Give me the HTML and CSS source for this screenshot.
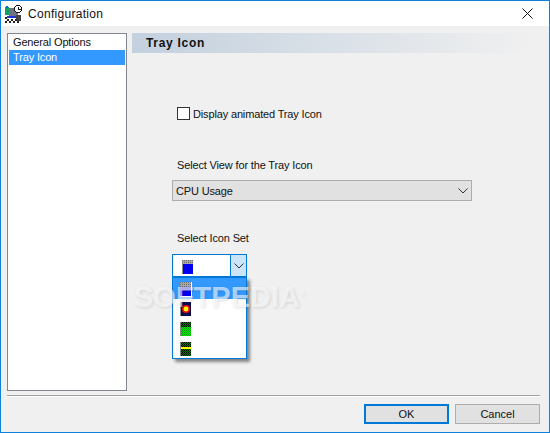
FILE: index.html
```html
<!DOCTYPE html>
<html lang="en">
<head>
  <meta charset="UTF-8">
  <title>Configuration</title>
  <link rel="stylesheet" href="styles.css">
</head>
<body>
  <svg class="defs" width="0" height="0">
    <defs>
      <pattern id="grey-dots" width="2" height="2" patternUnits="userSpaceOnUse">
        <rect width="2" height="2" fill="#a8a8a8"/>
        <rect width="1" height="1" fill="#6e6e6e"/>
      </pattern>
      <pattern id="black-dots" width="2" height="2" patternUnits="userSpaceOnUse">
        <rect width="2" height="2" fill="#0a7a0a"/>
        <rect width="1" height="1" fill="#000"/>
        <rect x="1" y="1" width="1" height="1" fill="#000"/>
      </pattern>
      <pattern id="green-check" width="2" height="2" patternUnits="userSpaceOnUse">
        <rect width="2" height="2" fill="#00f000"/>
        <rect width="1" height="1" fill="#0a9a0a"/>
        <rect x="1" y="1" width="1" height="1" fill="#0a9a0a"/>
      </pattern>
    </defs>
  </svg>

  <div class="window">
    <div class="titlebar">
      <svg class="app-icon" width="17" height="18" viewBox="0 0 17 18" shape-rendering="crispEdges">
        <rect x="4" y="3" width="9" height="9" fill="#6d7382"/>
        <rect x="0" y="2" width="4" height="8" fill="#12a060"/>
        <rect x="1" y="1" width="2" height="2" fill="#0c6bd0"/>
        <circle cx="13" cy="4" r="3.5" fill="#fff" stroke="#111" stroke-width="1"/>
        <path d="M13 2h1v3h-1zM14 4h2v1h-2z" fill="#111"/>
        <rect x="2" y="11" width="9" height="2" fill="#2035d0"/>
        <rect x="11" y="10" width="5" height="6" fill="#444"/>
        <path d="M0 12h2v2H0zM2 14h2v2H2zM0 16h2v2H0zM4 16h2v2H4zM6 14h2v2H6zM8 16h2v2H8zM10 14h2v2h-2zM12 16h2v2h-2z" fill="#222"/>
      </svg>
      <span class="title">Configuration</span>
      <svg class="close" width="11" height="11" viewBox="0 0 11 11">
        <path d="M.5.5l10 10M10.5.5l-10 10" stroke="#111" fill="none"/>
      </svg>
    </div>

    <div class="content">
      <div class="listbox">
        <div class="list-item">General Options</div>
        <div class="list-item selected">Tray Icon</div>
      </div>

      <div class="panel">
        <div class="panel-head">Tray Icon</div>
        <div class="panel-body">
          <label class="check-row">
            <span class="checkbox"></span>
            <span>Display animated Tray Icon</span>
          </label>

          <div class="field-label view-label">Select View for the Tray Icon</div>
          <div class="combo">
            <span>CPU Usage</span>
            <svg width="10" height="6" viewBox="0 0 10 6"><path d="M.5.5L5 5 9.5.5" stroke="#333" fill="none"/></svg>
          </div>

          <div class="field-label set-label">Select Icon Set</div>
          <div class="icon-combo">
            <div class="icon-value">
              <svg class="set-icon" width="11" height="14" viewBox="0 0 11 14" shape-rendering="crispEdges">
                <rect width="11" height="4" fill="url(#grey-dots)"/>
                <rect width="1" height="14" fill="#888"/>
                <rect x="1" y="4" width="10" height="10" fill="#0000f0"/>
              </svg>
            </div>
            <div class="icon-arrow">
              <svg width="10" height="6" viewBox="0 0 10 6"><path d="M.5.5L5 5 9.5.5" stroke="#333" fill="none"/></svg>
            </div>

            <div class="icon-list">
              <div class="icon-item selected">
                <svg class="set-icon" width="12" height="15" viewBox="0 0 12 15" shape-rendering="crispEdges">
                  <rect width="12" height="15" fill="#fff"/>
                  <rect width="11" height="5" fill="url(#grey-dots)"/>
                  <rect y="5" width="11" height="4" fill="#3a3ae0"/>
                  <rect y="9" width="11" height="5" fill="#0000f0"/>
                </svg>
              </div>
              <div class="icon-item">
                <svg class="set-icon" width="11" height="14" viewBox="0 0 11 14">
                  <rect width="11" height="14" fill="#0a0a50"/>
                  <rect width="1" height="14" fill="#888"/>
                  <circle cx="6" cy="7" r="4" fill="#f01010"/>
                  <circle cx="6" cy="7" r="2.4" fill="#ffff00"/>
                </svg>
              </div>
              <div class="icon-item">
                <svg class="set-icon" width="11" height="14" viewBox="0 0 11 14" shape-rendering="crispEdges">
                  <rect width="11" height="14" fill="url(#black-dots)"/>
                  <rect width="1" height="14" fill="#888"/>
                  <rect x="1" y="5" width="10" height="9" fill="url(#green-check)"/>
                </svg>
              </div>
              <div class="icon-item">
                <svg class="set-icon" width="11" height="14" viewBox="0 0 11 14" shape-rendering="crispEdges">
                  <rect width="11" height="14" fill="url(#black-dots)"/>
                  <rect width="1" height="14" fill="#888"/>
                  <rect x="1" y="5" width="10" height="2" fill="#ffff00"/>
                </svg>
              </div>
            </div>
          </div>
        </div>
      </div>
    </div>

    <div class="separator"></div>

    <div class="footer">
      <button class="btn default">OK</button>
      <button class="btn">Cancel</button>
    </div>

    <div class="watermark">SOFTPEDIA<sup>®</sup></div>
  </div>
</body>
</html>
```

FILE: styles.css
```css
html, body {
  margin: 0;
  height: 100%;
  overflow: hidden;
}

body {
  font-family: 'Liberation Sans', sans-serif;
  font-size: 11px;
  letter-spacing: -0.15px;
  color: #111;
}

.defs {
  display: block;
}

.window {
  position: relative;
  box-sizing: border-box;
  width: 550px;
  height: 433px;
  border: 1px solid #0f80dc;
  background: #f0f0f0;
  display: flex;
  flex-direction: column;
}

.titlebar {
  height: 25px;
  flex-shrink: 0;
  background: #fff;
  display: flex;
  align-items: center;
  padding: 0 16px 0 4px;
}

.app-icon {
  margin-right: 6px;
}

.title {
  flex: 1;
  font-size: 12px;
  letter-spacing: 0.3px;
}

/* Left list + right panel */
.content {
  display: flex;
  height: 358px;
  flex-shrink: 0;
  padding: 7px 0 0 6px;
  gap: 5px;
}

.listbox {
  box-sizing: border-box;
  width: 120px;
  height: 358px;
  border: 1px solid #82878f;
  background: #fff;
  padding: 1px;
}

.list-item {
  height: 15px;
  line-height: 14px;
  padding-left: 4px;
}

.list-item.selected {
  background: #3399ff;
  color: #fff;
  line-height: 15px;
}

.panel {
  width: 400px;
}

.panel-head {
  height: 20px;
  line-height: 20px;
  padding-left: 14px;
  font-size: 12px;
  font-weight: bold;
  letter-spacing: 0.7px;
  background: linear-gradient(to right, #c3d0de, #f0f0f0);
}

.panel-body {
  padding: 54px 0 0 40px;
}

.check-row {
  display: flex;
  align-items: center;
  gap: 3px;
  margin-left: 5px;
  height: 13px;
}

.checkbox {
  box-sizing: border-box;
  width: 13px;
  height: 13px;
  border: 1px solid #333;
  background: #fff;
}

.field-label {
  margin-left: 5px;
  height: 16px;
  line-height: 16px;
}

.view-label {
  margin-top: 37px;
}

.set-label {
  margin-top: 29px;
}

.combo {
  box-sizing: border-box;
  width: 300px;
  height: 21px;
  margin-top: 7px;
  border: 1px solid #adadad;
  background: #e1e1e1;
  display: flex;
  align-items: center;
  justify-content: space-between;
  padding: 0 3px 0 3px;
}

.icon-combo {
  position: relative;
  box-sizing: border-box;
  width: 75px;
  height: 23px;
  margin-top: 8px;
  border: 1px solid #0078d7;
  background: #fff;
  display: flex;
}

.icon-value {
  flex: 1;
  padding: 5px 0 0 9px;
  border-right: 1px solid #0078d7;
}

.icon-arrow {
  width: 15px;
  background: #cce4f7;
  display: flex;
  align-items: center;
  justify-content: center;
}

.set-icon {
  display: block;
}

/* open dropdown, hangs under the combo */
.icon-list {
  position: absolute;
  z-index: 1;
  top: 22px;
  left: -1px;
  box-sizing: border-box;
  width: 75px;
  height: 82px;
  border: 1px solid #0078d7;
  background: #fff;
  box-shadow: 3px 3px 3px rgba(0, 0, 0, 0.45);
}

.icon-item {
  height: 20px;
  padding: 3px 0 0 7px;
  box-sizing: border-box;
}

.icon-item.selected {
  height: 21px;
  padding-top: 4px;
  background: #3399ff;
}

.watermark {
  position: absolute;
  z-index: 2;
  top: 280px;
  left: 133px;
  font-size: 29px;
  font-weight: bold;
  letter-spacing: 0;
  color: rgba(255, 255, 255, 0.6);
  text-shadow: 1px 1px 3px rgba(0, 0, 0, 0.12);
  pointer-events: none;
}

.watermark sup {
  font-size: 8px;
  font-weight: normal;
}

.separator {
  height: 1px;
  margin: 4px 9px 0 6px;
  background: #a0a0a0;
  border-bottom: 1px solid #fff;
  flex-shrink: 0;
}

.footer {
  display: flex;
  justify-content: flex-end;
  gap: 6px;
  padding: 7px 9px 0 0;
}

.btn {
  box-sizing: border-box;
  width: 85px;
  height: 20px;
  padding: 0;
  border: 1px solid #adadad;
  background: #e1e1e1;
  font-family: inherit;
  font-size: 11px;
  color: #111;
}

.btn.default {
  border: 2px solid #0078d7;
}
```
